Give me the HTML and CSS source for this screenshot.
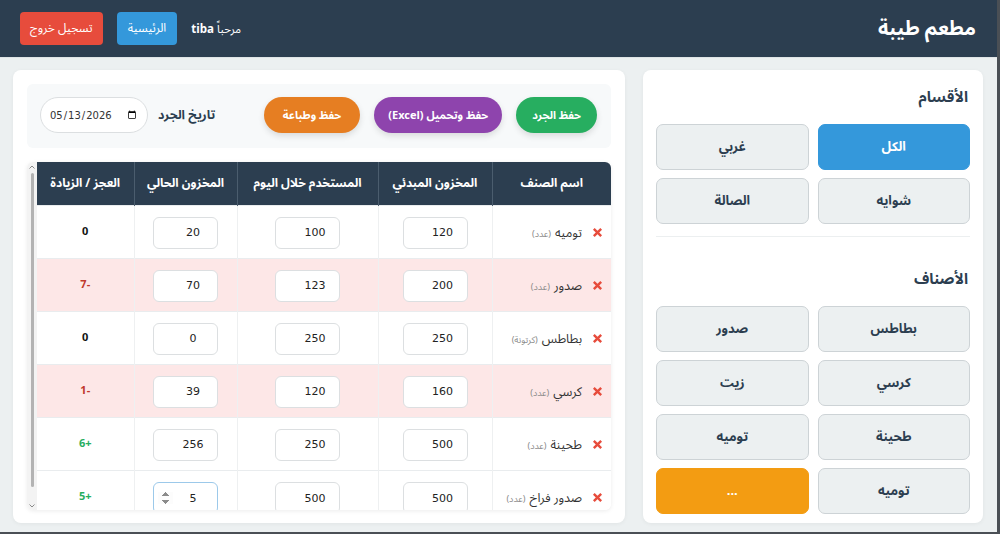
FILE: index.html
```html
<!DOCTYPE html>
<html lang="ar" dir="rtl">
<head>
<meta charset="utf-8">
<title>مطعم طيبة - الجرد</title>
<link rel="stylesheet" href="styles.css">
</head>
<body>
<div class="screen">
  <header class="topbar">
    <h1 class="brand">مطعم طيبة</h1>
    <div class="user-area">
      <span class="welcome">مرحباً <b>tiba</b></span>
      <a class="btn btn-home">الرئيسية</a>
      <a class="btn btn-logout">تسجيل خروج</a>
    </div>
  </header>

  <main class="layout">
    <aside class="side-panel">
      <h3 class="side-title">الأقسام</h3>
      <div class="tile-grid">
        <button class="tile active">الكل</button>
        <button class="tile">غربي</button>
        <button class="tile">شوايه</button>
        <button class="tile">الصالة</button>
      </div>
      <hr class="side-divider">
      <h3 class="side-title second">الأصناف</h3>
      <div class="tile-grid">
        <button class="tile">بطاطس</button>
        <button class="tile">صدور</button>
        <button class="tile">كرسي</button>
        <button class="tile">زيت</button>
        <button class="tile">طحينة</button>
        <button class="tile">توميه</button>
        <button class="tile">توميه</button>
        <button class="tile more">...</button>
      </div>
    </aside>

    <section class="stock-panel">
      <div class="toolbar">
        <div class="actions">
          <button class="pill pill-green">حفظ الجرد</button>
          <button class="pill pill-purple">حفظ وتحميل (Excel)</button>
          <button class="pill pill-orange">حفظ وطباعة</button>
        </div>
        <div class="date-field">
          <label class="date-label" for="stock-date">تاريخ الجرد</label>
          <input class="date-input" id="stock-date" type="date" value="2026-05-13" dir="ltr">
        </div>
      </div>

      <div class="table-wrap">
        <div class="table-scroll">
          <table class="stock-table">
            <thead>
              <tr>
                <th class="c-name">اسم الصنف</th>
                <th class="c-start">المخزون المبدئي</th>
                <th class="c-used">المستخدم خلال اليوم</th>
                <th class="c-now">المخزون الحالي</th>
                <th class="c-diff">العجز / الزيادة</th>
              </tr>
            </thead>
            <tbody>
              <tr>
                <td class="name-cell"><span class="remove"><svg viewBox="0 0 12 12" width="11" height="11"><path d="M2 2 L10 10 M10 2 L2 10" /></svg></span><span class="item-name">توميه</span><span class="unit">(عدد)</span></td>
                <td><input class="num" type="number" value="120"></td>
                <td><input class="num" type="number" value="100"></td>
                <td><input class="num" type="number" value="20"></td>
                <td class="diff zero">0</td>
              </tr>
              <tr class="shortage">
                <td class="name-cell"><span class="remove"><svg viewBox="0 0 12 12" width="11" height="11"><path d="M2 2 L10 10 M10 2 L2 10" /></svg></span><span class="item-name">صدور</span><span class="unit">(عدد)</span></td>
                <td><input class="num" type="number" value="200"></td>
                <td><input class="num" type="number" value="123"></td>
                <td><input class="num" type="number" value="70"></td>
                <td class="diff minus">-7</td>
              </tr>
              <tr>
                <td class="name-cell"><span class="remove"><svg viewBox="0 0 12 12" width="11" height="11"><path d="M2 2 L10 10 M10 2 L2 10" /></svg></span><span class="item-name">بطاطس</span><span class="unit">(كرتونة)</span></td>
                <td><input class="num" type="number" value="250"></td>
                <td><input class="num" type="number" value="250"></td>
                <td><input class="num" type="number" value="0"></td>
                <td class="diff zero">0</td>
              </tr>
              <tr class="shortage">
                <td class="name-cell"><span class="remove"><svg viewBox="0 0 12 12" width="11" height="11"><path d="M2 2 L10 10 M10 2 L2 10" /></svg></span><span class="item-name">كرسي</span><span class="unit">(عدد)</span></td>
                <td><input class="num" type="number" value="160"></td>
                <td><input class="num" type="number" value="120"></td>
                <td><input class="num" type="number" value="39"></td>
                <td class="diff minus">-1</td>
              </tr>
              <tr>
                <td class="name-cell"><span class="remove"><svg viewBox="0 0 12 12" width="11" height="11"><path d="M2 2 L10 10 M10 2 L2 10" /></svg></span><span class="item-name">طحينة</span><span class="unit">(عدد)</span></td>
                <td><input class="num" type="number" value="500"></td>
                <td><input class="num" type="number" value="250"></td>
                <td><input class="num" type="number" value="256"></td>
                <td class="diff plus">+6</td>
              </tr>
              <tr>
                <td class="name-cell"><span class="remove"><svg viewBox="0 0 12 12" width="11" height="11"><path d="M2 2 L10 10 M10 2 L2 10" /></svg></span><span class="item-name">صدور فراخ</span><span class="unit">(عدد)</span></td>
                <td><input class="num" type="number" value="500"></td>
                <td><input class="num" type="number" value="500"></td>
                <td><input class="num num-active" type="number" value="5"></td>
                <td class="diff plus">+5</td>
              </tr>
            </tbody>
          </table>
        </div>
        <div class="scrollbar" aria-hidden="true">
          <svg class="sb-arrow" viewBox="0 0 6 4" width="6" height="4"><path d="M0.5 3.5 L3 1 L5.5 3.5" /></svg>
          <span class="sb-thumb"></span>
          <svg class="sb-arrow" viewBox="0 0 6 4" width="6" height="4"><path d="M0.5 0.5 L3 3 L5.5 0.5" /></svg>
        </div>
      </div>
    </section>
  </main>
</div>
</body>
</html>
```

FILE: styles.css
```css
* { box-sizing: border-box; }

html, body {
  margin: 0;
  padding: 0;
}

body {
  font-family: "Noto Sans Arabic", "DejaVu Sans", sans-serif;
  background: #ecf0f1;
  color: #2c3e50;
}

.screen {
  width: 1000px;
  height: 534px;
  display: flex;
  flex-direction: column;
  background: #ecf0f1;
  border-right: 3px solid #4a4f55;
  border-bottom: 2px solid #4a4f55;
  overflow: hidden;
}

/* ---------- top bar ---------- */
.topbar {
  height: 58px;
  flex: none;
  background: #2c3e50;
  display: flex;
  align-items: center;
  justify-content: space-between;
  padding: 0 21px 0 20px;
  border-bottom: 1px solid #dfe4e6;
}

.brand {
  margin: 0;
  color: #fff;
  font-size: 20px;
  font-weight: 700;
}

.user-area {
  display: flex;
  align-items: center;
  gap: 14px;
}

.welcome {
  color: #fff;
  font-size: 11.5px;
}

.welcome b { font-weight: 700; }

.btn {
  display: inline-flex;
  align-items: center;
  justify-content: center;
  height: 33px;
  padding: 0 10px;
  border-radius: 4px;
  color: #fff;
  font-size: 12px;
}

.btn-home { background: #3498db; padding: 0 11px; }
.btn-logout { background: #e74c3c; }

/* ---------- layout ---------- */
.layout {
  flex: 1;
  display: flex;
  gap: 18px;
  padding: 12px 14px 9px 13px;
  min-height: 0;
}

.side-panel {
  width: 340px;
  flex: none;
  background: #fff;
  border-radius: 8px;
  padding: 13px;
  box-shadow: 0 1px 4px rgba(0, 0, 0, 0.05);
}

.stock-panel {
  flex: 1;
  background: #fff;
  border-radius: 8px;
  padding: 14px;
  display: flex;
  flex-direction: column;
  gap: 14px;
  box-shadow: 0 1px 4px rgba(0, 0, 0, 0.05);
  min-height: 0;
}

/* ---------- side panel ---------- */
.side-title {
  margin: 4px 2px 17px 0;
  font-size: 15px;
  line-height: 20px;
  font-weight: 700;
  color: #2c3e50;
}

.side-title.second {
  margin-top: 32px;
}

.tile-grid {
  display: grid;
  grid-template-columns: 1fr 1fr;
  gap: 8px 9px;
}

.tile {
  height: 46px;
  border: 1px solid #cdd3d6;
  border-radius: 7px;
  background: #ecf0f1;
  color: #2c3e50;
  font-family: inherit;
  font-size: 13px;
  font-weight: 700;
}

.tile.active {
  background: #3498db;
  border-color: #3498db;
  color: #fff;
}

.tile.more {
  background: #f39c12;
  border-color: #f39c12;
  color: #fff;
}

.side-divider {
  margin: 12px 0 0;
  border: 0;
  border-top: 1px solid #eceff0;
}

/* ---------- toolbar ---------- */
.toolbar {
  flex: none;
  display: flex;
  align-items: center;
  justify-content: space-between;
  background: #f7f9fa;
  border-radius: 6px;
  padding: 13px 14px 15px 13px;
}

.actions {
  display: flex;
  gap: 14px;
}

.pill {
  height: 36px;
  padding: 0 17px;
  border: 0;
  border-radius: 18px;
  color: #fff;
  font-family: inherit;
  font-size: 11px;
  font-weight: 700;
  box-shadow: 0 3px 6px rgba(0, 0, 0, 0.12);
}

.pill-green { background: #27ae60; padding: 0 16px; }
.pill-purple { background: #8e44ad; padding: 0 14px; }
.pill-orange { background: #e67e22; padding: 0 19px; }

.date-field {
  display: flex;
  align-items: center;
  gap: 10px;
}

.date-label {
  font-size: 12.5px;
  font-weight: 700;
  color: #2c3e50;
}

.date-input {
  width: 108px;
  height: 36px;
  border: 1px solid #dcdfe1;
  border-radius: 18px;
  padding: 0 8px;
  font-family: "DejaVu Sans", sans-serif;
  font-size: 10px;
  color: #333;
  background: #fff;
}

/* ---------- table ---------- */
.table-wrap {
  flex: 1;
  min-height: 0;
  display: flex;
  border-radius: 6px;
  overflow: hidden;
  box-shadow: 0 1px 4px rgba(0, 0, 0, 0.08);
  margin-bottom: -1px;
}

.table-scroll {
  flex: 1;
  min-width: 0;
  overflow: hidden;
}

.scrollbar {
  width: 10px;
  flex: none;
  background: #f3f3f3;
  display: flex;
  flex-direction: column;
  align-items: center;
  padding: 3px 0 2px;
  gap: 3px;
}

.sb-arrow {
  flex: none;
  fill: none;
  stroke: #8a8a8a;
  stroke-width: 1;
}

.sb-thumb {
  flex: 1;
  width: 3px;
  border-radius: 2px;
  background: #b3b3b3;
  margin: 1px 0 14px;
}

.stock-table {
  width: 100%;
  border-collapse: collapse;
  table-layout: fixed;
}

.c-name { width: 119px; }
.c-start { width: 114px; }
.c-used { width: 141px; }
.c-now { width: 103px; }
.c-diff { width: 97px; }

.stock-table th {
  height: 43px;
  background: #2c3e50;
  color: #fff;
  font-size: 12px;
  font-weight: 700;
  border-left: 1px solid #4b5d6e;
  padding: 0 4px;
}

.stock-table th:last-child { border-left: 0; }

.stock-table td {
  height: 53px;
  border-top: 1px solid #e9ecee;
  border-left: 1px solid #eef0f1;
  text-align: center;
  padding: 0;
  background: #fff;
}

.stock-table td:last-child { border-left: 0; }

.stock-table tr.shortage td { background: #fde7e7; }

.name-cell {
  text-align: right !important;
  padding-right: 8px !important;
  white-space: nowrap;
}

.remove {
  display: inline-block;
  vertical-align: middle;
  margin-left: 10px;
}

.remove svg {
  display: block;
  stroke: #e74c3c;
  stroke-width: 2.6;
  fill: none;
}

.item-name {
  font-size: 12.5px;
  color: #333;
  margin-left: 4px;
}

.unit {
  font-size: 9px;
  color: #8a8a8a;
}

.num {
  width: 65px;
  height: 32px;
  border: 1px solid #dcdfe1;
  border-radius: 6px;
  text-align: center;
  font-family: "DejaVu Sans", sans-serif;
  font-size: 11px;
  color: #222;
  background: #fff;
  padding: 0 4px;
}

.num-active { border-color: #9cc9ea; }
.num-active::-webkit-inner-spin-button { opacity: 1; }

.diff {
  font-size: 11px;
  font-weight: 700;
}

.diff.zero { color: #111; }
.diff.minus { color: #c0392b; }
.diff.plus { color: #27ae60; }
```
